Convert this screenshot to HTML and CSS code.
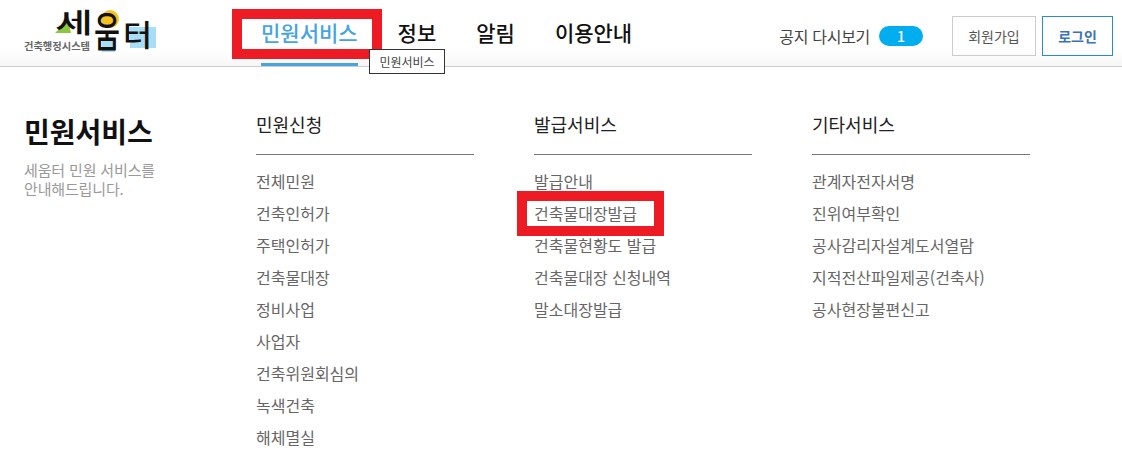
FILE: index.html
```html
<!DOCTYPE html>
<html lang="ko">
<head>
  <meta charset="UTF-8">
  <title>세움터</title>
  <link rel="stylesheet" href="styles.css">
</head>
<body>
  <header class="header">
    <a class="logo" href="#">
      <svg width="160" height="54" viewBox="0 0 160 54">
        <circle cx="110" cy="19" r="9" fill="#f6c01e"/>
        <rect x="102" y="41" width="13" height="11" fill="#a9dcf5"/>
        <rect x="130" y="27" width="26" height="21" fill="#a9dcf5"/>
        <polygon points="55,33 68,20 71,33" fill="#8dc63f"/>
        <text x="24" y="50" class="logo-sub" textLength="66" lengthAdjust="spacingAndGlyphs">건축행정시스템</text>
        <text x="55" y="33" class="logo-main logo-se" textLength="38" lengthAdjust="spacingAndGlyphs">세</text>
        <text x="94" y="47" class="logo-main logo-um" textLength="26" lengthAdjust="spacingAndGlyphs">움</text>
        <text x="123" y="46" class="logo-main logo-teo" textLength="29" lengthAdjust="spacingAndGlyphs">터</text>
      </svg>
    </a>
    <nav class="gnb">
      <a class="gnb-item active" href="#">민원서비스</a>
      <a class="gnb-item" href="#">정보</a>
      <a class="gnb-item" href="#">알림</a>
      <a class="gnb-item" href="#">이용안내</a>
    </nav>
    <div class="util">
      <span class="notice">공지 다시보기</span>
      <span class="pill">1</span>
      <a class="btn join" href="#">회원가입</a>
      <a class="btn login" href="#">로그인</a>
    </div>
    <span class="tooltip">민원서비스</span>
    <span class="mark mark-nav"></span>
  </header>

  <div class="menu">
    <div class="intro">
      <h2>민원서비스</h2>
      <p>세움터 민원 서비스를<br>안내해드립니다.</p>
    </div>
    <div class="cols">
      <div class="col">
        <h3>민원신청</h3>
        <ul>
          <li>전체민원</li>
          <li>건축인허가</li>
          <li>주택인허가</li>
          <li>건축물대장</li>
          <li>정비사업</li>
          <li>사업자</li>
          <li>건축위원회심의</li>
          <li>녹색건축</li>
          <li>해체멸실</li>
        </ul>
      </div>
      <div class="col">
        <h3>발급서비스</h3>
        <ul>
          <li>발급안내</li>
          <li class="marked">건축물대장발급<span class="mark mark-item"></span></li>
          <li>건축물현황도 발급</li>
          <li>건축물대장 신청내역</li>
          <li>말소대장발급</li>
        </ul>
      </div>
      <div class="col">
        <h3>기타서비스</h3>
        <ul>
          <li>관계자전자서명</li>
          <li>진위여부확인</li>
          <li>공사감리자설계도서열람</li>
          <li>지적전산파일제공(건축사)</li>
          <li>공사현장불편신고</li>
        </ul>
      </div>
    </div>
  </div>
</body>
</html>
```

FILE: styles.css
```css
* {
  box-sizing: border-box;
}

body {
  margin: 0;
  height: 470px;
  overflow: hidden;
  background-color: #fff;
  font-family: "Noto Sans CJK KR", "Noto Sans", sans-serif;
  color: #333;
}

a {
  text-decoration: none;
  color: inherit;
}

.header {
  position: relative;
  display: flex;
  align-items: flex-start;
  height: 67px;
  border-bottom: 1px solid #ccc;
  background: linear-gradient(to bottom, #fff 50px, #f6f6f6 66px);
}

.logo {
  display: block;
  width: 261px;
  flex: none;
}

.logo svg {
  display: block;
  overflow: visible;
}

.logo-sub {
  font-size: 10px;
  font-weight: 700;
  fill: #666;
}

.logo-main {
  font-weight: 500;
  fill: #111;
}

.logo-se {
  font-size: 27px;
}

.logo-um {
  font-size: 41px;
}

.logo-teo {
  font-size: 30px;
}

.gnb {
  display: flex;
  gap: 40px;
  height: 66px;
}

.gnb-item {
  height: 66px;
  padding-top: 17px;
  font-size: 21px;
  line-height: 31px;
  font-weight: 500;
  color: #111;
}

.gnb-item.active {
  color: #45a5e0;
  border-bottom: 3px solid #45a5e0;
}

.util {
  display: flex;
  align-items: center;
  height: 40px;
  margin-top: 16px;
  margin-left: auto;
  margin-right: 9px;
}

.notice {
  font-size: 16px;
  letter-spacing: -0.3px;
  color: #444;
}

.pill {
  width: 44px;
  height: 20px;
  margin-left: 9px;
  margin-right: 29px;
  border-radius: 10px;
  background-color: #00aeef;
  color: #fff;
  text-align: center;
  font-size: 14px;
  line-height: 20px;
  font-weight: 500;
}

.btn {
  display: block;
  height: 40px;
  font-size: 14px;
  line-height: 38px;
  text-align: center;
}

.join {
  width: 84px;
  margin-right: 6px;
  border: 1px solid #ccc;
  color: #555;
}

.login {
  width: 71px;
  border: 1px solid #2b8ad0;
  color: #3b72b5;
  font-weight: 700;
}

.tooltip {
  position: absolute;
  left: 369px;
  top: 49px;
  width: 76px;
  height: 25px;
  border: 1px solid #333;
  background-color: #fff;
  font-size: 12px;
  line-height: 23px;
  text-align: center;
  color: #444;
  z-index: 3;
}

.mark {
  position: absolute;
  border: 10px solid #ed1c24;
  z-index: 2;
}

.mark-nav {
  left: 232px;
  top: 9px;
  width: 150px;
  height: 50px;
}

.mark-item {
  left: -17px;
  top: -7px;
  width: 147px;
  height: 45px;
}

.menu {
  display: flex;
  padding: 0 0 0 24px;
}

.intro {
  width: 232px;
  flex: none;
}

.intro h2 {
  margin: 43px 0 0;
  font-size: 28px;
  line-height: 42px;
  font-weight: 700;
  color: #111;
}

.intro p {
  margin: 8px 0 0;
  font-size: 15px;
  line-height: 19px;
  letter-spacing: -0.15px;
  color: #999;
}

.cols {
  display: flex;
  gap: 60px;
}

.col {
  width: 218px;
}

.col h3 {
  margin: 0;
  height: 88px;
  padding-top: 44px;
  border-bottom: 1px solid #777;
  font-size: 18px;
  line-height: 27px;
  font-weight: 400;
  color: #222;
}

.col ul {
  margin: 0;
  padding: 11px 0 0;
  list-style: none;
}

.col li {
  height: 32px;
  font-size: 16px;
  line-height: 31px;
  color: #666;
}

.marked {
  position: relative;
}
```
